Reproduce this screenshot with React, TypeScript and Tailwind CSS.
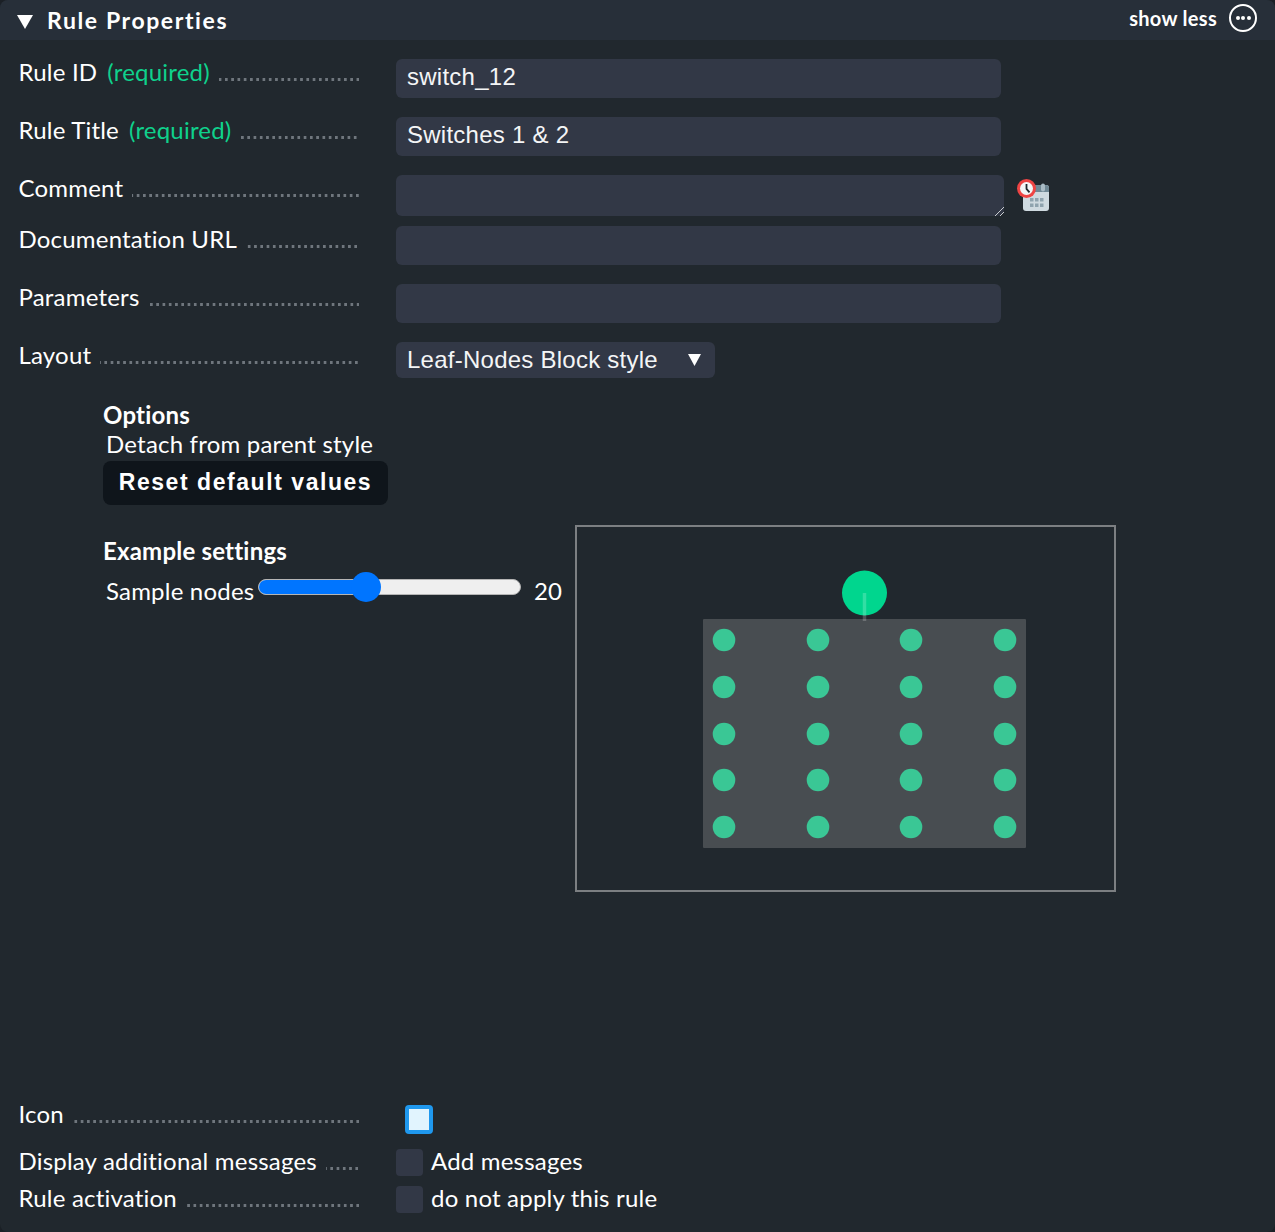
const labelFont = "font-['Lato',sans-serif] text-[24px] tracking-[0.2px] text-white";
const boldFont = "font-['Lato',sans-serif] text-[24px] font-bold tracking-[0.2px] text-white";
const inputFont = "font-['Liberation_Sans',sans-serif] text-[24px] tracking-[0.25px] text-[#f4f5f6]";

function Dots({ end = 359 }: { end?: number }) {
  return (
    <div
      className="mb-[3px] h-[3px] flex-1 self-end bg-[linear-gradient(to_right,transparent_3.27px,#6f767d_3.27px)] bg-[length:6.27px_3px] bg-right bg-repeat-x"
      style={{ marginRight: 359 - end }}
    />
  );
}

function Label({ text, required, end }: { text: string; required?: boolean; end?: number }) {
  return (
    <div className={`flex h-[25px] w-[340.5px] items-center gap-[9px] ${labelFont}`}>
      <span className="whitespace-nowrap">
        {text}
        {required && <span className="ml-[10px] text-[#0fd18c]">(required)</span>}
      </span>
      <Dots end={end} />
    </div>
  );
}

function TextRow({ label, required, value, end }: { label: string; required?: boolean; value?: string; end?: number }) {
  return (
    <div className="flex items-start pl-[18.5px]">
      <Label text={label} required={required} end={end} />
      <div className={`ml-[37px] flex h-[39px] w-[605px] items-center rounded-md bg-[#323846] px-[11px] pb-[3px] ${inputFont}`}>
        {value}
      </div>
    </div>
  );
}

function CalendarIcon() {
  return (
    <svg width="34" height="34" viewBox="0 0 34 34" className="ml-[13px] mt-[4px]">
      <rect x="6" y="6" width="26" height="26" rx="3" fill="#cfdae0" />
      <path d="M6 13V9a3 3 0 0 1 3-3h20a3 3 0 0 1 3 3v4z" fill="#6f8794" />
      <rect x="24" y="4.5" width="4" height="8" rx="2" fill="#a9bbc5" />
      <g fill="#8fa3ae">
        <rect x="13" y="19" width="3.5" height="3.5" />
        <rect x="18" y="19" width="3.5" height="3.5" />
        <rect x="23" y="19" width="3.5" height="3.5" />
        <rect x="13" y="24.5" width="3.5" height="3.5" />
        <rect x="18" y="24.5" width="3.5" height="3.5" />
        <rect x="23" y="24.5" width="3.5" height="3.5" />
      </g>
      <circle cx="9.5" cy="9.5" r="9.5" fill="#ef4444" />
      <circle cx="9.5" cy="9.5" r="6.5" fill="#f4f6f7" />
      <path d="M9.5 5v4.8l3 3.6" fill="none" stroke="#22282e" strokeWidth="1.8" />
    </svg>
  );
}

function TreeChart() {
  const xs = [149, 243, 336, 430];
  const ys = [115, 162, 209, 255, 302];
  return (
    <svg width="537" height="363" viewBox="2 2 537 363" className="block">
      <rect x="128" y="94" width="323" height="229" rx="1" fill="#484d51" />
      <circle cx="289.5" cy="68" r="22.5" fill="#00d68e" />
      {ys.map((y) =>
        xs.map((x) => <circle key={`${x}-${y}`} cx={x} cy={y} r="11.3" fill="#3ac795" />)
      )}
      <line x1="289.5" y1="68" x2="289.5" y2="96" stroke="#ffffff" strokeOpacity="0.2" strokeWidth="3.5" />
    </svg>
  );
}

function CheckRow({ label, text, end, className }: { label: string; text: string; end?: number; className?: string }) {
  return (
    <div className={`flex h-[27px] items-center pl-[18.5px] ${className ?? ""}`}>
      <div className="-mt-[4px]">
        <Label text={label} end={end} />
      </div>
      <div className="ml-[37px] h-[27px] w-[27px] rounded-[4px] bg-[#323846]" />
      <span className={`-mt-[4px] ml-[8px] ${labelFont}`}>{text}</span>
    </div>
  );
}

export default function App() {
  return (
    <div className="h-[1232px] w-[1275px] overflow-hidden bg-[#1b2026]">
      <div className="h-full overflow-hidden rounded-lg bg-[#21282e]">
        <div className="flex h-10 items-center bg-[#272f39] pl-[17px] pr-[18px]">
          <svg width="16" height="14" viewBox="0 0 16 14" className="mt-[3px]">
            <path d="M0 0h16L8 14z" fill="#fff" />
          </svg>
          <span className="ml-[14px] font-['Lato',sans-serif] text-[23px] font-bold tracking-[1.6px] text-white">
            Rule Properties
          </span>
          <span className="-mt-[5px] ml-auto font-['Lato',sans-serif] text-[20px] font-bold tracking-[0.3px] text-white">
            show less
          </span>
          <div className="-mt-[4px] ml-[12px] flex h-[28px] w-[28px] items-center justify-center gap-[1.5px] rounded-full border-2 border-white">
            <i className="h-[4px] w-[4px] rounded-full bg-white" />
            <i className="h-[4px] w-[4px] rounded-full bg-white" />
            <i className="h-[4px] w-[4px] rounded-full bg-white" />
          </div>
        </div>

        <div className="mt-[19px] flex flex-col gap-[19px]">
          <TextRow label="Rule ID" required value="switch_12" />
          <TextRow label="Rule Title" required value="Switches 1 & 2" end={357} />
        </div>

        <div className="mt-[19px] flex items-start pl-[18.5px]">
          <Label text="Comment" />
          <div className="relative ml-[37px] h-[41px] w-[608px] rounded-md bg-[#323846]">
            <svg width="10" height="10" viewBox="0 0 10 10" className="absolute bottom-0 right-0">
              <path d="M1 10 10 1M6 10l4-4" stroke="#c9ccd0" strokeWidth="1" />
            </svg>
          </div>
          <CalendarIcon />
        </div>

        <div className="mt-[10px] flex flex-col gap-[19px]">
          <TextRow label="Documentation URL" end={357} />
          <TextRow label="Parameters" />
        </div>

        <div className="mt-[19px] flex items-start pl-[18.5px]">
          <Label text="Layout" end={358} />
          <div className={`ml-[37px] flex h-[36px] w-[319px] items-center justify-between rounded-md bg-[#323846] pl-[11px] pr-[14px] ${inputFont}`}>
            <span className="-mt-[1px]">Leaf-Nodes Block style</span>
            <svg width="13" height="12" viewBox="0 0 13 12">
              <path d="M0 0h13L6.5 12z" fill="#fff" />
            </svg>
          </div>
        </div>

        <div className="mt-[22px] pl-[103px]">
          <div className={`${boldFont} leading-[30px]`}>Options</div>
          <div className={`${labelFont} -mt-[1px] pl-[3px] leading-[30px]`}>Detach from parent style</div>
          <div className="mt-[2px] inline-flex h-[44px] w-[285px] items-center justify-center rounded-lg bg-[#0f151b] pb-[2px] font-['Liberation_Sans',sans-serif] text-[23px] font-bold tracking-[1.55px] text-white">
            Reset default values
          </div>
        </div>

        <div className="mt-[20px] flex">
          <div className="w-[575px] pl-[103px] pt-[11px]">
            <div className={`${boldFont} leading-[30px]`}>Example settings</div>
            <div className="mt-[7px] flex items-center">
              <span className={`${labelFont} ml-[3px] w-[152px] shrink-0`}>Sample nodes</span>
              <div className="relative -mt-[8px] h-[16px] w-[263px] shrink-0 rounded-full border border-[#b5b5b5] bg-[#efefef]">
                <div className="h-full w-[109px] rounded-full bg-[#0075ff]" />
                <div className="absolute left-[92px] top-[-8px] h-[30px] w-[30px] rounded-full bg-[#0075ff]" />
              </div>
              <span className={`${labelFont} ml-[13px]`}>20</span>
            </div>
          </div>
          <div className="h-[367px] w-[541px] border-2 border-[#7c7f82]">
            <TreeChart />
          </div>
        </div>

        <div className="mt-[210px] flex items-start pl-[18.5px]">
          <div className="-mt-[1px]">
            <Label text="Icon" />
          </div>
          <div className="ml-[46px] mt-[3px] h-[29px] w-[28px] rounded-[4px] border-[4px] border-[#1f98ee] bg-[#e1f4fe]" />
        </div>

        <CheckRow className="mt-[15px]" label="Display additional messages" text="Add messages" end={358} />
        <CheckRow className="mt-[10px]" label="Rule activation" text="do not apply this rule" />
      </div>
    </div>
  );
}
